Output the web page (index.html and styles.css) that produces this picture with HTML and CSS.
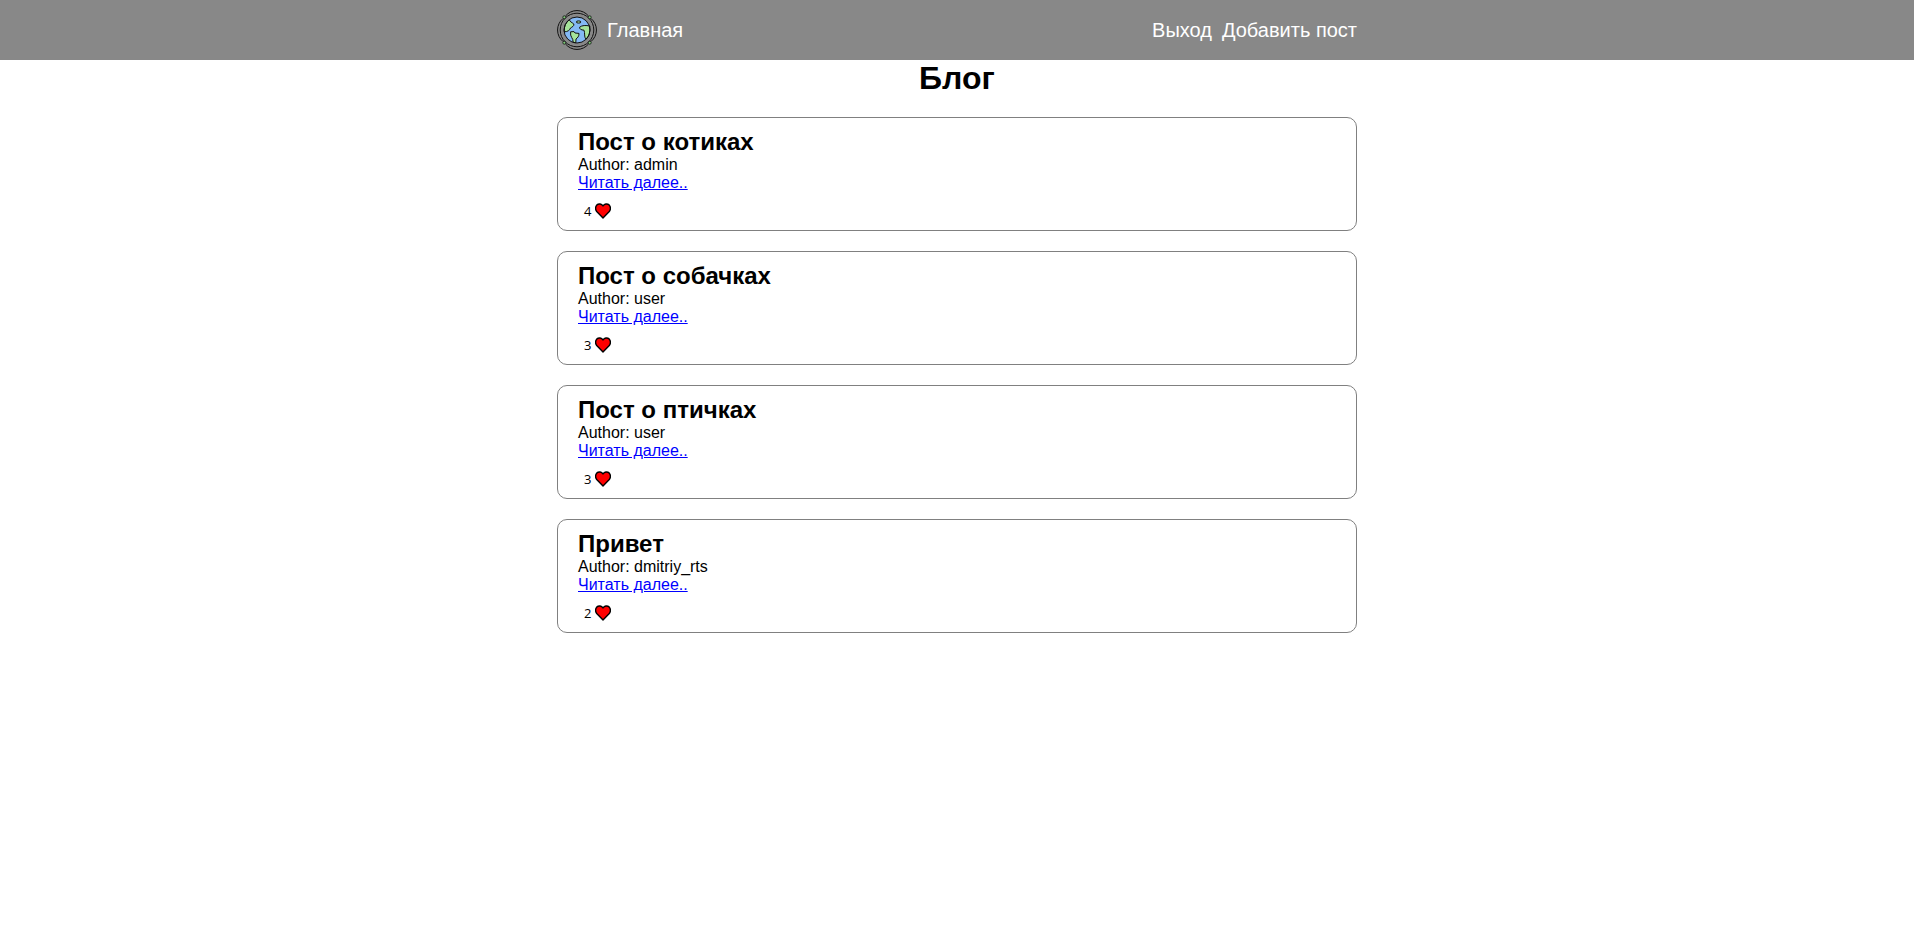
FILE: index.html
```html
<!DOCTYPE html>
<html lang="ru">
<head>
<meta charset="utf-8">
<title>Блог</title>
<link rel="stylesheet" href="styles.css">
</head>
<body>
<svg class="sprite" aria-hidden="true">
  <symbol id="heart" viewBox="0 0 16 16">
    <path d="M8 15 L1.7 8.5 C.2 6.6 .2 3.5 1.9 1.9 C3.7 .4 6.6 .6 8 3 C9.4 .6 12.3 .4 14.1 1.9 C15.8 3.5 15.8 6.6 14.3 8.5 Z" fill="#f00" stroke="#000" stroke-width="1.4" stroke-linejoin="round"/>
  </symbol>
</svg>
<header class="header">
  <nav class="container nav">
    <div class="nav-group">
      <svg class="logo" viewBox="0 0 40 40" role="img" aria-label="Логотип">
        <g fill="none" stroke="#111" stroke-width="1">
          <circle cx="20" cy="20" r="16.8"/>
          <path d="M8.5 6 A14.9 14.9 0 0 1 31.5 6 M34 8.5 A14.9 14.9 0 0 1 34 31.5 M31.5 34 A14.9 14.9 0 0 1 8.5 34 M6 31.5 A14.9 14.9 0 0 1 6 8.5"/>
        </g>
        <circle cx="20" cy="20" r="13" fill="#84b9f5"/>
        <g fill="#a5e39a" stroke="#111" stroke-linejoin="round">
          <path d="M12.4 9.8 C13 12 14.5 12 16.8 14 C17.4 16 15 17 13.5 18 C13 20 10.5 22 7.2 21.8 C7 16 9 12 12.4 9.8Z"/>
          <path d="M32.8 16 C29 15.2 25 15.2 22.6 17.2 C22.4 19 24 20 27 20.2 C28.2 23 26.8 27 29 29.2 C32 26.5 33.5 22 32.8 16Z"/>
          <path d="M13.6 21.8 L17 21.6 L18 23 L22 23.4 C22.3 26 20.5 28 19 29 L18.8 32.8 C17.6 32.8 16.6 32.5 16 32 C16.8 28.5 12.6 27 13.6 21.8Z"/>
          <ellipse cx="21.6" cy="12" rx="2.3" ry="1.1"/>
        </g>
        <circle cx="20" cy="20" r="13" fill="none" stroke="#111"/>
        <g fill="#7fc97a" stroke="#111" stroke-width=".8">
          <circle cx="7.3" cy="7.3" r="1.5"/><circle cx="32.7" cy="7.3" r="1.5"/>
          <circle cx="7.3" cy="32.7" r="1.5"/><circle cx="32.7" cy="32.7" r="1.5"/>
        </g>
      </svg>
      <a class="nav-link" href="#">Главная</a>
    </div>
    <div class="nav-group">
      <a class="nav-link" href="#">Выход</a>
      <a class="nav-link" href="#">Добавить пост</a>
    </div>
  </nav>
</header>
<main class="container">
  <h1 class="title">Блог</h1>
  <div class="posts">
    <article class="post">
      <h2 class="post-title">Пост о котиках</h2>
      <p class="post-author">Author: admin</p>
      <a class="post-link" href="#">Читать далее..</a>
      <button class="like" type="button">4 <svg class="heart" aria-label="Нравится"><use href="#heart"/></svg></button>
    </article>
    <article class="post">
      <h2 class="post-title">Пост о собачках</h2>
      <p class="post-author">Author: user</p>
      <a class="post-link" href="#">Читать далее..</a>
      <button class="like" type="button">3 <svg class="heart" aria-label="Нравится"><use href="#heart"/></svg></button>
    </article>
    <article class="post">
      <h2 class="post-title">Пост о птичках</h2>
      <p class="post-author">Author: user</p>
      <a class="post-link" href="#">Читать далее..</a>
      <button class="like" type="button">3 <svg class="heart" aria-label="Нравится"><use href="#heart"/></svg></button>
    </article>
    <article class="post">
      <h2 class="post-title">Привет</h2>
      <p class="post-author">Author: dmitriy_rts</p>
      <a class="post-link" href="#">Читать далее..</a>
      <button class="like" type="button">2 <svg class="heart" aria-label="Нравится"><use href="#heart"/></svg></button>
    </article>
  </div>
</main>
</body>
</html>
```
FILE: styles.css
```css
* {
  box-sizing: border-box;
  margin: 0;
  padding: 0;
}

body {
  font: 16px/18px "Liberation Sans", Arial, sans-serif;
  color: #000;
  background: #fff;
}

.sprite {
  display: none;
}

.container {
  max-width: 800px;
  margin: 0 auto;
}

.header {
  background: #888;
}

.nav {
  display: flex;
  justify-content: space-between;
  align-items: center;
  padding: 10px 0;
}

.nav-group {
  display: flex;
  align-items: center;
  gap: 10px;
}

.logo {
  width: 40px;
  height: 40px;
}

.nav-link {
  color: #fff;
  font-size: 20px;
  line-height: 24px;
  text-decoration: none;
}

.title {
  font-size: 32px;
  line-height: 37px;
  text-align: center;
  margin-bottom: 20px;
}

.posts {
  display: flex;
  flex-direction: column;
  gap: 20px;
}

.post {
  display: flex;
  flex-direction: column;
  align-items: flex-start;
  padding: 10px 20px;
  border: 1px solid #808080;
  border-radius: 10px;
}

.post-title {
  font-size: 24px;
  line-height: 28px;
}

.post-link {
  color: #00f;
}

.like {
  display: flex;
  align-items: center;
  gap: 4px;
  margin-top: 10px;
  padding: 0 6px;
  border: 0;
  background: none;
  color: #000;
  font: 13px/18px "Open Sans", sans-serif;
  cursor: pointer;
}

.heart {
  width: 16px;
  height: 16px;
}
```
